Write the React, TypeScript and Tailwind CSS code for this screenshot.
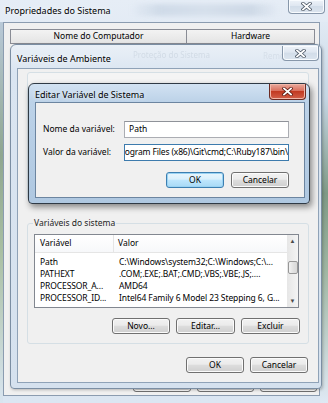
import React from 'react';

const FONT = "font-['Noto_Sans','Liberation_Sans',sans-serif]";

const CloseGlyph = ({ active }: { active?: boolean }) => (
  <svg width="11" height="9" viewBox="0 0 11 9">
    <path d="M2 1.5 L9 7.5 M9 1.5 L2 7.5" stroke={active ? '#5a1a12' : '#4d5866'} strokeWidth="3.4" strokeLinecap="square" />
    <path d="M2 1.5 L9 7.5 M9 1.5 L2 7.5" stroke="#ffffff" strokeWidth="1.8" strokeLinecap="square" />
  </svg>
);

const CloseButton = ({ active, className = '' }: { active?: boolean; className?: string }) => (
  <div
    className={`absolute flex items-center justify-center rounded-b-[4px] border border-t-0 ${
      active
        ? 'border-[#6b2a22] bg-[linear-gradient(#e9a99c,#d9705e_45%,#c23a22_50%,#d2604a)] shadow-[inset_0_0_0_1px_#f0b8aa]'
        : 'border-[#8797aa] bg-[linear-gradient(#eef3f9,#dfe7f1_45%,#d2dde9_50%,#dce5ef)] shadow-[inset_0_0_0_1px_#f8fbfe]'
    } ${className}`}
  >
    <CloseGlyph active={active} />
  </div>
);

const Btn = ({ label, w, def }: { label: string; w: string; def?: boolean }) => (
  <div
    className={`flex h-[16px] items-center justify-center rounded-[3px] border ${w} ${
      def
        ? 'border-[#3c7fb1] bg-[linear-gradient(#eaf6fd,#d9f0fc_45%,#bee6fd_50%,#a7d9f5)] shadow-[inset_0_0_0_1px_#9ad3f3]'
        : 'border-[#707070] bg-[linear-gradient(#f2f2f2,#ebebeb_45%,#dddddd_50%,#cfcfcf)] shadow-[inset_0_0_0_1px_#fbfbfb]'
    }`}
  >
    {label}
  </div>
);

const rows = [
  ['Path', 'C:\\Windows\\system32;C:\\Windows;C:\\...'],
  ['PATHEXT', '.COM;.EXE;.BAT;.CMD;.VBS;.VBE;.JS;....'],
  ['PROCESSOR_A...', 'AMD64'],
  ['PROCESSOR_ID...', 'Intel64 Family 6 Model 23 Stepping 6, G...'],
];

export default function App() {
  return (
    <div className={`relative h-[403px] w-[328px] overflow-hidden bg-[#d6e2ee] text-[8.5px] leading-none text-black ${FONT}`}>
      {/* glass frame edges of the outer window */}
      <div className="absolute inset-0 bg-[linear-gradient(180deg,#e6edf6,#d7e3f0_30%,#dbe6f2)]" />
      <div className="absolute left-0 top-[22px] h-[381px] w-[3px] bg-[linear-gradient(180deg,#b9c9d8,#8fa690_35%,#a9bfa2_60%,#d9e5f0)]" />
      <div className="absolute right-0 top-[22px] h-[381px] w-[8px] bg-[linear-gradient(180deg,#e1eaf4,#c6d6e4_20%,#7f9a86_45%,#9fb6a2_65%,#dfe9f4)]" />
      <div className="absolute left-[130px] top-[4px] h-[12px] w-[150px] bg-[linear-gradient(90deg,transparent,#c7d4e3_20%,#d0dbe8_50%,#c4d1e0_80%,transparent)] opacity-70 blur-[2px]" />

      {/* Propriedades do Sistema */}
      <div className="absolute left-[5px] top-[6px] text-[9px] [text-shadow:0_0_5px_#ffffff]">Propriedades do Sistema</div>
      <CloseButton className="left-[288px] top-0 h-[14px] w-[37px]" />

      <div className="absolute left-[3px] top-[22px] flex h-[374px] w-[317px] flex-col border border-[#8b9cb0] bg-[#f0f0f0]">
        <div className="mt-[6px] flex pl-[6px]">
          <div className="flex h-[15px] w-[177px] items-center justify-center border border-[#898c95] bg-[linear-gradient(#f3f3f3,#e4e4e4)]">Nome do Computador</div>
          <div className="flex h-[15px] w-[128px] items-center justify-center border border-l-0 border-[#898c95] bg-[linear-gradient(#f3f3f3,#e4e4e4)]">Hardware</div>
        </div>
        <div className="mt-auto mb-[3px] flex justify-end gap-[6px] pr-[2px]">
          <Btn label="OK" w="w-[58px]" />
          <Btn label="Cancelar" w="w-[57px]" />
          <Btn label="Aplicar" w="w-[57px]" />
        </div>
      </div>

      {/* Variáveis de Ambiente */}
      <div className="absolute left-[10px] top-[44px] h-[345px] w-[312px] rounded-t-[6px] rounded-b-[4px] border border-[#7b8ea3] bg-[linear-gradient(180deg,#eaf0f7,#dae5f1_8%,#d5e1ee)] shadow-[1px_1px_3px_rgba(0,0,0,0.25)]">
        <div className="absolute left-[6px] top-[9px] text-[9px] [text-shadow:0_0_5px_#ffffff]">Variáveis de Ambiente</div>
        <div className="absolute left-[122px] top-[6px] text-[8px] text-[#9aa8b8] opacity-25 blur-[0.7px]">Proteção do Sistema</div>
        <div className="absolute left-[252px] top-[7px] text-[8px] text-[#9aa8b8] opacity-20 blur-[0.7px]">Remoto</div>
        <CloseButton className="left-[271px] top-[1px] h-[15px] w-[37px]" />

        <div className="absolute left-[6px] top-[23px] flex h-[315px] w-[302px] flex-col border border-[#8fa2b7] bg-[#f0f0f0]">
          {/* user variables (mostly hidden) */}
          <div className="mx-[9px] mt-[3px] h-[128px] rounded-[3px] border border-[#d5dfe5] bg-[#f4f4f4]" />

          {/* system variables */}
          <div className="relative mx-[9px] mt-[23px] flex h-[121px] flex-col rounded-[3px] border border-[#d5dfe5] px-[6px] pt-[10px]">
            <div className="absolute left-[5px] top-[-5px] bg-[#f0f0f0] px-[1px] text-[#1e1e1e]">Variáveis do sistema</div>
            <div className="relative mr-[3px] h-[74px] overflow-hidden border border-[#828790] bg-white">
              <div className="flex h-[18px] w-[252px] items-center border-b border-[#e5e5e5] bg-[linear-gradient(#ffffff,#f7f8fa)]">
                <div className="flex h-full w-[79px] items-center border-r border-[#e5e5e5] pl-[5px]">Variável</div>
                <div className="pl-[4px]">Valor</div>
              </div>
              <div className="mt-[3px] flex flex-col tracking-[-0.1px]">
                {rows.map(([k, v]) => (
                  <div key={k} className="flex h-[12px] w-[252px] items-center overflow-hidden whitespace-nowrap">
                    <div className="w-[79px] shrink-0 pl-[5px]">{k}</div>
                    <div className="pl-[5px]">{v}</div>
                  </div>
                ))}
              </div>
              {/* scrollbar */}
              <div className="absolute right-0 top-0 flex h-full w-[11px] flex-col items-center bg-[linear-gradient(90deg,#e6e6e6,#f4f4f4)]">
                <div className="flex h-[12px] items-center justify-center text-[6px] text-[#4a4a4a]">▲</div>
                <div className="mt-[14px] h-[13px] w-[10px] rounded-[2px] border border-[#979797] bg-[linear-gradient(90deg,#f3f3f3,#e2e2e2_50%,#d8d8d8)]" />
                <div className="mt-auto flex h-[12px] items-center justify-center text-[6px] text-[#4a4a4a]">▼</div>
              </div>
            </div>
            <div className="mt-[10px] flex justify-end gap-[6px] pr-[2px]">
              <Btn label="Novo..." w="w-[58px]" />
              <Btn label="Editar..." w="w-[59px]" />
              <Btn label="Excluir" w="w-[59px]" />
            </div>
          </div>

          <div className="mt-[13px] flex justify-end gap-[6px] pr-[10px]">
            <Btn label="OK" w="w-[58px]" />
            <Btn label="Cancelar" w="w-[58px]" />
          </div>
        </div>
      </div>

      {/* Editar Variável de Sistema */}
      <div className="absolute left-[28px] top-[83px] h-[121px] w-[282px] rounded-t-[6px] rounded-b-[4px] border border-[#2f3a45] bg-[linear-gradient(180deg,#d2e2f2,#bcd2e8_15%,#afc8e1)] shadow-[2px_3px_6px_rgba(0,0,0,0.45)]">
        <div className="absolute left-[6px] top-[6px] text-[9px] [text-shadow:0_0_5px_#ffffff]">Editar Variável de Sistema</div>
        <CloseButton active className="left-[240px] top-0 h-[16px] w-[37px]" />

        <div className="absolute left-[6px] top-[18px] flex h-[96px] w-[270px] flex-col border border-[#6c85a0] bg-[#f0f0f0] pl-[7px] pr-[15px] pt-[18px]">
          <div className="flex h-[17px] items-center">
            <div className="w-[81px] whitespace-nowrap">Nome da variável:</div>
            <div className="flex h-full flex-1 items-center border border-[#abadb3] border-t-[#8f9299] bg-white pl-[4px]">Path</div>
          </div>
          <div className="mt-[6px] flex h-[17px] items-center">
            <div className="w-[81px] whitespace-nowrap">Valor da variável:</div>
            <div className="flex h-full min-w-0 flex-1 items-center justify-end overflow-hidden whitespace-nowrap border border-[#3d7bad] bg-white tracking-[-0.15px]">
              ogram Files (x86)\Git\cmd;C:\Ruby187\bin\
            </div>
          </div>
          <div className="mt-[11px] flex justify-end gap-[7px]">
            <Btn label="OK" w="w-[58px]" def />
            <Btn label="Cancelar" w="w-[58px]" />
          </div>
        </div>
      </div>
    </div>
  );
}
